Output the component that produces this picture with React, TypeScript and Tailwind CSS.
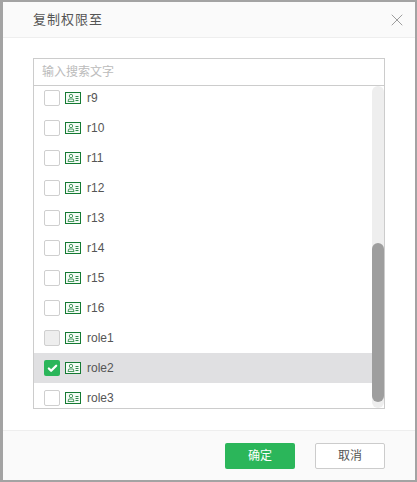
import { Check, X } from 'lucide-react';

const ROLES = ['r9', 'r10', 'r11', 'r12', 'r13', 'r14', 'r15', 'r16', 'role1', 'role2', 'role3'];

function RoleIcon() {
  return (
    <svg width="16" height="12" viewBox="0 0 16 12" fill="none" className="shrink-0">
      <rect x="0.5" y="0.5" width="15" height="11" fill="#f4faf5" stroke="#157a33" />
      <circle cx="6" cy="4" r="1.7" stroke="#4a9c62" />
      <path d="M3 9.5l.8-2.5h4.4l.8 2.5z" stroke="#4a9c62" />
      <path d="M10.5 4.5h3M10.5 6.5h3M10.5 8.5h3" stroke="#2f8a4a" />
    </svg>
  );
}

function RoleRow({ name }: { name: string }) {
  const checked = name === 'role2';
  const disabled = name === 'role1';
  return (
    <div className={`flex h-[30px] items-center pl-[10px] ${checked ? 'bg-[#e0e0e2]' : ''}`}>
      {checked ? (
        <span className="flex h-4 w-4 shrink-0 items-center justify-center rounded-[2px] bg-[#2bb65a]">
          <Check className="h-[11px] w-[11px] text-white" strokeWidth={5} />
        </span>
      ) : (
        <span
          className={`h-4 w-4 shrink-0 rounded-[2px] border border-[#cfcfcf] ${disabled ? 'bg-[#eeeeee]' : 'bg-white'}`}
        />
      )}
      <span className="ml-[5px]">
        <RoleIcon />
      </span>
      <span className="ml-[6px] text-[12px] text-[#555555]">{name}</span>
    </div>
  );
}

export default function App() {
  return (
    <div className="h-[482px] w-[417px] bg-[#a3a3a3] pb-[2px] pl-[3px] pr-[2px] pt-[2px] font-['Liberation_Sans','Noto_Sans_CJK_SC',sans-serif]">
      <div className="flex h-full flex-col bg-white">
        <div className="flex h-[36px] shrink-0 items-center justify-between border-b border-[#eeeeee] bg-[#fafafa] pl-[30px] pr-[8px]">
          <span className="text-[13px] tracking-[1px] text-[#555555]">复制权限至</span>
          <X className="h-[20px] w-[20px] text-[#8a8a8a]" strokeWidth={1} />
        </div>

        <div className="flex-1 px-[30px] pt-[20px]">
          <div className="flex h-[28px] items-center border border-[#cccccc] pl-[8px] text-[12px] text-[#bbbbbb]">
            输入搜索文字
          </div>
          <div className="relative h-[323px] overflow-hidden border-x border-b border-[#cccccc]">
            <div className="-mt-[3px] mr-[12px]">
              {ROLES.map((name) => (
                <RoleRow key={name} name={name} />
              ))}
            </div>
            <div className="absolute bottom-0 right-0 top-0 w-[12px] rounded-full bg-[#eeeeee]">
              <div className="absolute bottom-[6px] left-0 h-[159px] w-[12px] rounded-full bg-[#9e9e9e]" />
            </div>
          </div>
        </div>

        <div className="flex h-[50px] shrink-0 items-center justify-end gap-[20px] border-t border-[#eeeeee] bg-[#fafafa] pr-[30px]">
          <button className="h-[26px] w-[70px] rounded-[2px] bg-[#2bb65a] text-[12px] text-white">确定</button>
          <button className="h-[26px] w-[70px] rounded-[2px] border border-[#cccccc] bg-white text-[12px] text-[#555555]">
            取消
          </button>
        </div>
      </div>
    </div>
  );
}
